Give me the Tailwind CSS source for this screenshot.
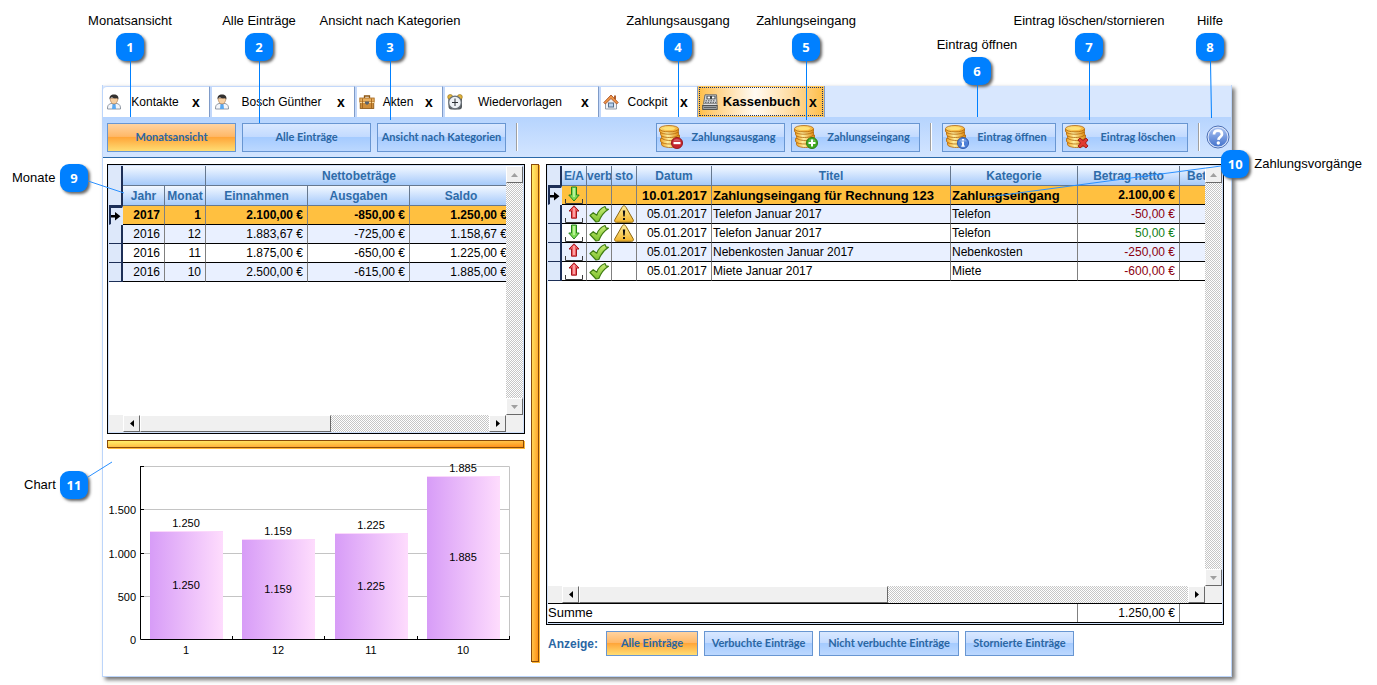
<!DOCTYPE html>
<html lang="de">
  <head>
    <meta charset="UTF-8" />
    <meta name="viewport" content="width=device-width, initial-scale=1.0" />
    <title>Kassenbuch</title>
    <script src="https://cdn.jsdelivr.net/npm/@tailwindcss/browser@4"></script>
  </head>
  <body class="bg-white font-['Liberation_Sans',sans-serif] text-xs text-black">
    <!-- Icons -->
    <svg class="absolute size-0">
      <defs>
        <linearGradient id="gold" x1="0" x2="1"><stop offset="0" stop-color="#f0a020" /><stop offset=".4" stop-color="#fff0a0" /><stop offset="1" stop-color="#e08a10" /></linearGradient>
        <linearGradient id="goldTop" x1="0" x2="1" y1="0" y2="1"><stop offset="0" stop-color="#ffe98a" /><stop offset="1" stop-color="#f5a623" /></linearGradient>
        <linearGradient id="bar" x1="0" x2="1"><stop offset="0" stop-color="#d79cf7" /><stop offset="1" stop-color="#fedcfd" /></linearGradient>
        <linearGradient id="help" x1="0" x2="0" y1="0" y2="1"><stop offset="0" stop-color="#a9c2f2" /><stop offset="1" stop-color="#4573cc" /></linearGradient>
        <linearGradient id="leaf" x1="0" x2="0" y1="0" y2="1"><stop offset="0" stop-color="#c9ee7a" /><stop offset="1" stop-color="#7cc02a" /></linearGradient>
        <linearGradient id="warn" x1="0" x2="0" y1="0" y2="1"><stop offset="0" stop-color="#fff0a0" /><stop offset="1" stop-color="#f2b42a" /></linearGradient>
      </defs>
      <symbol id="coins" viewBox="0 0 24 24">
        <g stroke="#b0660c" stroke-width=".8">
          <path d="M2.5 17.5v2c0 1.600 4 3 9 3s9-1.400 9-3v-2z" fill="url(#gold)" />
          <path d="M1.500 13.500v2.500c0 1.600 4 3 9 3s9-1.400 9-3v-2.500z" fill="url(#gold)" />
          <path d="M2.500 10v2.500c0 1.600 4 3 9 3s9-1.400 9-3V10z" fill="url(#gold)" />
          <path d="M1.500 7v2.500c0 1.600 4 3 9 3s9-1.400 9-3V7z" fill="url(#gold)" />
          <path d="M.5 4v2c0 1.700 4 3.200 9.500 3.200s9.500-1.500 9.500-3.200V4z" fill="url(#gold)" />
          <ellipse cx="10" cy="3.700" rx="9.500" ry="3.200" fill="url(#goldTop)" />
        </g>
        <ellipse cx="10" cy="3.500" rx="6" ry="1.600" fill="#ffe27a" />
      </symbol>
      <symbol id="minus" viewBox="0 0 12 12"><circle cx="6" cy="6" r="5.600" fill="#c4242b" stroke="#8c1218" stroke-width=".8" /><path d="M2 4.500a4.300 4.300 0 0 1 8 0z" fill="#fff" opacity=".25" /><rect x="2.500" y="5" width="7" height="2.200" fill="#fff" /></symbol>
      <symbol id="plus" viewBox="0 0 12 12"><circle cx="6" cy="6" r="5.600" fill="#3fa81f" stroke="#23760d" stroke-width=".8" /><path d="M2 4.500a4.300 4.300 0 0 1 8 0z" fill="#fff" opacity=".25" /><path d="M5 2.500h2V5h2.500v2H7v2.500H5V7H2.500V5H5z" fill="#fff" /></symbol>
      <symbol id="info" viewBox="0 0 12 12"><circle cx="6" cy="6" r="5.600" fill="#4d80d8" stroke="#2850a4" stroke-width=".8" /><path d="M2 4.500a4.300 4.300 0 0 1 8 0z" fill="#fff" opacity=".3" /><path d="M5 2h2v1.600H5zM4.500 4.500H7v4h.8v1.300H4.300V8.500H5V5.700h-.5z" fill="#fff" /></symbol>
      <symbol id="cross" viewBox="0 0 12 12"><path d="M1 3l2-2 3 2.500L9 1l2 2-2.500 3L11 9l-2 2-3-2.500L3 11 1 9l2.500-3z" fill="#e03a30" stroke="#9a1614" stroke-width=".9" /></symbol>
      <symbol id="person" viewBox="0 0 16 16">
        <path d="M1.500 15c-.3-3 1-5 3.500-5.500h6c2.500.5 3.800 2.500 3.500 5.500z" fill="#f4f6fa" stroke="#77828f" stroke-width=".8" />
        <path d="M6.500 10h3l.5 5H6z" fill="#5aa8f0" />
        <path d="M4.200 4.500C4.200 8 6 10 8 10s3.800-2 3.800-5.500z" fill="#f6cfa2" stroke="#a87444" stroke-width=".6" />
        <path d="M3.700 5.500C3 2 5 .5 8 .5s5 1.500 4.300 5L11 4C9 4.500 7 4 6 3.200L4.500 4z" fill="#33302f" />
      </symbol>
      <symbol id="briefcase" viewBox="0 0 16 16">
        <path d="M5.500 4V2h5v2" fill="none" stroke="#8c5410" stroke-width="1.300" />
        <rect x=".8" y="4" width="14.400" height="4" fill="#e8ae5e" stroke="#a4671d" stroke-width=".8" />
        <rect x="1.200" y="8.500" width="13.600" height="6" fill="#cf8f3c" stroke="#87520f" stroke-width=".8" />
        <path d="M.5 8.500h15" stroke="#f7d69a" />
        <path d="M3.500 4.500v10M12.500 4.500v10" stroke="#9a5e18" stroke-width=".8" />
        <path d="M6 7.500h4v2L8 11l-2-1.500z" fill="#59636e" />
      </symbol>
      <symbol id="clock" viewBox="0 0 16 16">
        <rect x="1.500" y="2" width="13.500" height="13.500" rx="3" fill="#555a5e" />
        <circle cx="3.200" cy="3" r="2.500" fill="#e2b43c" stroke="#8d6a14" stroke-width=".6" />
        <circle cx="12.800" cy="3" r="2.500" fill="#e2b43c" stroke="#8d6a14" stroke-width=".6" />
        <circle cx="8" cy="8.500" r="6.300" fill="#eef2f6" stroke="#6a7178" stroke-width="1.200" />
        <path d="M8 4.500V12M5 8.500h6" stroke="#2c3136" />
      </symbol>
      <symbol id="house" viewBox="0 0 16 16">
        <path d="M11 1.500h2v4h-2z" fill="#b06030" />
        <path d="M2.500 8L8 3l5.500 5v7h-11z" fill="#eef0f4" stroke="#7c8794" stroke-width=".8" />
        <path d="M.8 8.500L8 1l7.200 7.500-1.500 1.500L8 4.500 2.300 10z" fill="#ef9646" stroke="#a0441a" stroke-width=".8" />
        <rect x="5.500" y="9" width="5" height="4" fill="#b8d2f0" stroke="#55708e" />
      </symbol>
      <symbol id="register" viewBox="0 0 16 16">
        <path d="M3 .8h11.500l.5 9H1.500z" fill="#d4d7d9" stroke="#5d6265" stroke-width=".9" />
        <rect x="4.500" y="1.800" width="9" height="3.500" fill="#3c4143" />
        <path d="M5.500 2.500h2.500v2H5.500zM10 2.500h2.500v2H10z" fill="#fff" />
        <path d="M3.500 6.800h10M3 8.400h11" stroke="#4a4f52" stroke-width=".9" stroke-dasharray="1.500 1" />
        <path d="M1.500 9.800h13.300l.5 1.700H.8z" fill="#f4f5f6" stroke="#75797c" stroke-width=".6" />
        <rect x=".7" y="11.500" width="14.500" height="4" fill="#9da1a4" stroke="#45494b" stroke-width=".9" />
        <path d="M2 13.500h12" stroke="#5c6063" />
      </symbol>
      <symbol id="up" viewBox="0 0 20 18">
        <path d="M1.500 13v4.500h17V13" fill="none" stroke="#3c3c3c" />
        <path d="M10 .8l5 5.200h-2.500v7.200h-5V6H5z" fill="#ee5a5f" stroke="#a3161c" />
        <path d="M10 3v9" stroke="#ffb8b8" stroke-width="1.500" />
      </symbol>
      <symbol id="down" viewBox="0 0 20 18">
        <path d="M1.500 13v4.500h17V13" fill="none" stroke="#3c3c3c" />
        <path d="M10 15L4.800 9h2.700V1h5v8h2.700z" fill="#7edb55" stroke="#22821c" />
        <path d="M10 2v9" stroke="#ccf7b0" stroke-width="1.500" />
      </symbol>
      <symbol id="check" viewBox="0 0 20 18"><path d="M1 10.500l3.200-2.800 3.600 2.500C9 6.500 12 3 16 1.500l1 2.300 2.500.5C15 7 12 11 9.800 16.500L7 17z" fill="url(#leaf)" stroke="#3f7c12" stroke-width="1.200" stroke-linejoin="round" /></symbol>
      <symbol id="warning" viewBox="0 0 20 18">
        <path d="M10 .8c1 0 1.500.6 2 1.500l7.200 12.500c.6 1.300 0 2.500-1.500 2.500H2.300c-1.500 0-2.100-1.200-1.500-2.500L8 2.300C8.500 1.400 9 .8 10 .8z" fill="url(#warn)" stroke="#8a6410" />
        <path d="M8.800 5.500h2.400l-.5 6H9.300zM9 13h2v2H9z" fill="#111" />
      </symbol>
      <symbol id="pointer" viewBox="0 0 10 10"><path d="M0 4h4V1l5.500 4.200L4 9.500v-3H0z" fill="#000" /></symbol>
    </svg>

    <div class="relative flex min-h-screen flex-col pt-[85px] pr-[145px] pb-2 pl-[102px]">
      <!-- Fenster -->
      <div class="flex flex-1 flex-col border border-t-0 border-[#bcd5fa] bg-white shadow-[3px_3px_4px_#777]">
        <!-- Reiter -->
        <div class="flex h-8 border-t border-[#eef0f4] bg-[#d8e7fe]" role="tablist">
          <div class="flex w-[107px] items-center rounded-tl-sm border-t border-r border-t-[#c3d8fa] border-r-[#7f9bc8] bg-white pr-[5px] pl-[3px]">
            <svg class="size-4"><use href="#person" /></svg>
            <button class="flex-1 text-center" role="tab">Kontakte</button>
            <button class="w-4 text-sm leading-4 font-bold" aria-label="Kontakte schließen">x</button>
          </div>
          <div class="flex w-[145px] items-center border-t border-r border-l-2 border-t-[#c3d8fa] border-r-[#7f9bc8] border-l-[#c3d8fa] bg-white pr-[5px] pl-[2px]">
            <svg class="size-4"><use href="#person" /></svg>
            <button class="flex-1 text-center" role="tab">Bosch Günther</button>
            <button class="w-4 text-sm leading-4 font-bold" aria-label="Bosch Günther schließen">x</button>
          </div>
          <div class="flex w-[88px] items-center border-t border-r border-l-2 border-t-[#c3d8fa] border-r-[#7f9bc8] border-l-[#c3d8fa] bg-white pr-[5px] pl-[2px]">
            <svg class="size-4"><use href="#briefcase" /></svg>
            <button class="flex-1 text-center" role="tab">Akten</button>
            <button class="w-4 text-sm leading-4 font-bold" aria-label="Akten schließen">x</button>
          </div>
          <div class="flex w-[156px] items-center border-t border-r border-l-2 border-t-[#c3d8fa] border-r-[#7f9bc8] border-l-[#c3d8fa] bg-white pr-[5px] pl-[2px]">
            <svg class="size-4"><use href="#clock" /></svg>
            <button class="flex-1 text-center" role="tab">Wiedervorlagen</button>
            <button class="w-4 text-sm leading-4 font-bold" aria-label="Wiedervorlagen schließen">x</button>
          </div>
          <div class="flex w-[99px] items-center border-t border-r border-l-2 border-t-[#c3d8fa] border-r-[#7f9bc8] border-l-[#c3d8fa] bg-white pr-[5px] pl-[2px]">
            <svg class="size-4"><use href="#house" /></svg>
            <button class="flex-1 text-center" role="tab">Cockpit</button>
            <button class="w-4 text-sm leading-4 font-bold" aria-label="Cockpit schließen">x</button>
          </div>
          <div class="flex w-[127px] border-r border-[#7f9bc8] bg-[#ffc559] p-px">
            <div class="flex flex-1 items-center border border-dotted border-[#15306a] bg-linear-to-r from-[#ffc04a] via-[#fffaf2] via-45% to-[#ffc04a] pr-px pl-[2px]">
              <svg class="size-4"><use href="#register" /></svg>
              <button class="flex-1 text-center text-[13px] font-bold" role="tab" aria-selected="true">Kassenbuch</button>
              <button class="w-4 text-sm leading-4 font-bold" aria-label="Kassenbuch schließen">x</button>
            </div>
          </div>
        </div>

        <!-- Werkzeugleiste -->
        <div class="flex h-[41px] items-center gap-[6px] border-b border-[#2b69a8] bg-linear-to-b from-[#b6d4fe] to-[#d3e5ff] pr-px pl-1 font-['Lato',sans-serif] text-[11px] font-bold text-[#2a66a3]">
          <button class="h-[29px] w-[129px] border border-[#6896d2] bg-[linear-gradient(#ffd3a0,#ffb868_46%,#ffa63a_50%,#ffdd74)]">Monatsansicht</button>
          <button class="h-[29px] w-[129px] border border-[#6896d2] bg-[linear-gradient(#d9e8ff,#c2daff_48%,#a5cbff_50%,#bcd8ff)]">Alle Einträge</button>
          <button class="h-[29px] w-[129px] border border-[#6896d2] bg-[linear-gradient(#d9e8ff,#c2daff_48%,#a5cbff_50%,#bcd8ff)] whitespace-nowrap">Ansicht nach Kategorien</button>
          <div class="ml-1 h-7 w-[2px] border-r border-l border-r-white border-l-[#a0a0a0]"></div>
          <button class="ml-auto flex h-[29px] w-[129px] items-center border border-[#6896d2] bg-[linear-gradient(#d9e8ff,#c2daff_48%,#a5cbff_50%,#bcd8ff)] pl-[2px]">
            <svg class="size-6" viewBox="0 0 24 24"><use href="#coins" width="24" height="24" /><use href="#minus" x="12" y="12" width="12" height="12" /></svg>
            <span class="flex-1">Zahlungsausgang</span>
          </button>
          <button class="flex h-[29px] w-[129px] items-center border border-[#6896d2] bg-[linear-gradient(#d9e8ff,#c2daff_48%,#a5cbff_50%,#bcd8ff)] pl-[2px]">
            <svg class="size-6" viewBox="0 0 24 24"><use href="#coins" width="24" height="24" /><use href="#plus" x="12" y="12" width="12" height="12" /></svg>
            <span class="flex-1">Zahlungseingang</span>
          </button>
          <div class="mx-1 h-7 w-[2px] border-r border-l border-r-white border-l-[#a0a0a0]"></div>
          <button class="flex h-[29px] w-[114px] items-center border border-[#6896d2] bg-[linear-gradient(#d9e8ff,#c2daff_48%,#a5cbff_50%,#bcd8ff)] pl-[2px]">
            <svg class="size-6" viewBox="0 0 24 24"><use href="#coins" width="24" height="24" /><use href="#info" x="12" y="12" width="12" height="12" /></svg>
            <span class="flex-1">Eintrag öffnen</span>
          </button>
          <button class="flex h-[29px] w-[126px] items-center border border-[#6896d2] bg-[linear-gradient(#d9e8ff,#c2daff_48%,#a5cbff_50%,#bcd8ff)] pl-[2px]">
            <svg class="size-6" viewBox="0 0 24 24"><use href="#coins" width="24" height="24" /><use href="#cross" x="12" y="12" width="12" height="12" /></svg>
            <span class="flex-1">Eintrag löschen</span>
          </button>
          <div class="ml-1 h-7 w-[2px] border-r border-l border-r-white border-l-[#a0a0a0]"></div>
          <button aria-label="Hilfe">
            <svg class="size-6" viewBox="0 0 24 24">
              <circle cx="12" cy="12" r="11" fill="#dfe9fb" stroke="#4c6fb5" />
              <circle cx="12" cy="12" r="9.500" fill="url(#help)" />
              <path d="M8 9.500C8 7 9.700 5.700 12 5.700s4 1.300 4 3.500c0 2.800-3.400 2.800-3.600 5.600" fill="none" stroke="#fff" stroke-width="2.700" />
              <circle cx="12.300" cy="18" r="1.700" fill="#fff" />
            </svg>
          </button>
        </div>

        <div class="flex flex-1 gap-[6px] pt-[6px] pr-[7px] pb-[10px] pl-1">
          <!-- Monate + Chart -->
          <div class="flex w-[418px] flex-col">
            <div class="flex h-[270px] border border-black bg-[#cfe0fb] p-px">
              <div class="flex min-w-0 flex-1 flex-col bg-white">
                <div class="flex-1 overflow-hidden">
                  <table class="w-[403px] table-fixed border-separate border-spacing-0">
                    <colgroup>
                      <col class="w-[14px]" /><col class="w-[42px]" /><col class="w-[41px]" /><col class="w-[102px]" /><col class="w-[102px]" /><col class="w-[102px]" />
                    </colgroup>
                    <thead class="text-[#2f6ca9]">
                      <tr class="h-5">
                        <th rowspan="2" class="border-r-2 border-b border-[#1d2f57] bg-[#dde8fa] p-0"></th>
                        <th colspan="2" class="border-r border-b border-[#66788f] bg-linear-to-b from-[#f3f8ff] to-[#a6cafa] p-0"></th>
                        <th colspan="3" class="border-b border-[#66788f] bg-linear-to-b from-[#f3f8ff] to-[#a6cafa] p-0">Nettobeträge</th>
                      </tr>
                      <tr class="h-5">
                        <th class="border-r border-b border-[#66788f] bg-linear-to-b from-[#f3f8ff] to-[#a6cafa] p-0">Jahr</th>
                        <th class="border-r border-b border-[#66788f] bg-linear-to-b from-[#f3f8ff] to-[#a6cafa] p-0">Monat</th>
                        <th class="border-r border-b border-[#66788f] bg-linear-to-b from-[#f3f8ff] to-[#a6cafa] p-0">Einnahmen</th>
                        <th class="border-r border-b border-[#66788f] bg-linear-to-b from-[#f3f8ff] to-[#a6cafa] p-0">Ausgaben</th>
                        <th class="border-b border-[#66788f] bg-linear-to-b from-[#f3f8ff] to-[#a6cafa] p-0">Saldo</th>
                      </tr>
                    </thead>
                    <tbody id="months"></tbody>
                  </table>
                </div>
                <div class="flex h-[17px] bg-[#f0f0f0] pl-[14px]">
                  <button class="flex w-[17px] items-center justify-center border border-t-white border-r-[#696969] border-b-[#696969] border-l-white" aria-label="nach links"><svg class="h-[7px] w-1" viewBox="0 0 4 7"><path d="M4 0v7L0 3.500z" /></svg></button>
                  <div class="w-[191px] border border-t-white border-r-[#696969] border-b-[#696969] border-l-white"></div>
                  <div class="flex-1 bg-[conic-gradient(#fff_25%,#c6c6c6_0_50%,#fff_0_75%,#c6c6c6_0)] bg-[length:2px_2px]"></div>
                  <button class="flex w-[17px] items-center justify-center border border-t-white border-r-[#696969] border-b-[#696969] border-l-white" aria-label="nach rechts"><svg class="h-[7px] w-1" viewBox="0 0 4 7"><path d="M0 0v7l4-3.500z" /></svg></button>
                </div>
              </div>
              <div class="flex w-[17px] flex-col bg-[#f0f0f0] pb-[17px]">
                <button class="flex h-[17px] items-center justify-center border border-t-white border-r-[#696969] border-b-[#696969] border-l-white" aria-label="nach oben"><svg class="h-1 w-[7px] fill-[#a0a0a0]" viewBox="0 0 7 4"><path d="M0 4h7L3.500 0z" /></svg></button>
                <div class="flex-1 bg-[conic-gradient(#fff_25%,#c6c6c6_0_50%,#fff_0_75%,#c6c6c6_0)] bg-[length:2px_2px]"></div>
                <button class="flex h-[17px] items-center justify-center border border-t-white border-r-[#696969] border-b-[#696969] border-l-white" aria-label="nach unten"><svg class="h-1 w-[7px] fill-[#a0a0a0]" viewBox="0 0 7 4"><path d="M0 0h7L3.500 4z" /></svg></button>
              </div>
            </div>
            <div class="mt-[6px] mr-px h-2 border border-[#8a4a08] bg-linear-to-br from-[#fff06a] to-[#ff9010] shadow-[1px_1px_#ffb93a]"></div>
            <svg class="mt-2 h-[210px] w-full" viewBox="0 0 418 210">
              <path d="M34 10.500h368.500V183M34 53.500h368M34 97.500h368M34 140.500h368" fill="none" stroke="#c4c4c4" />
              <g id="chart"></g>
              <path d="M33.500 10v173.500h369V180M33 10.500h4M33 53.500h4M33 97.500h4M33 140.500h4M125.500 180v3M217.500 180v3M310.500 180v3" fill="none" stroke="#000" />
              <g text-anchor="end" font-size="11">
                <text x="29" y="58">1.500</text>
                <text x="29" y="102">1.000</text>
                <text x="29" y="145">500</text>
                <text x="29" y="188">0</text>
              </g>
            </svg>
          </div>

          <div class="mb-1 w-2 border border-[#8a4a08] bg-linear-to-br from-[#fff06a] to-[#ff9010] shadow-[1px_1px_#ffb93a]"></div>

          <!-- Zahlungsvorgänge -->
          <div class="ml-px flex min-w-0 flex-1 flex-col">
            <div class="flex flex-1 flex-col border border-black bg-[#cfe0fb] p-px">
              <div class="flex flex-1">
                <div class="flex min-w-0 flex-1 flex-col bg-white">
                  <div class="flex-1 overflow-hidden">
                    <table class="w-[calc(100%+65px)] table-fixed border-separate border-spacing-0 whitespace-nowrap">
                      <colgroup>
                        <col class="w-[14px]" /><col class="w-[25px]" /><col class="w-[25px]" /><col class="w-[25px]" /><col class="w-[75px]" /><col /><col class="w-[127px]" /><col class="w-[102px]" /><col class="w-[90px]" />
                      </colgroup>
                      <thead class="text-[#2f6ca9]">
                        <tr class="h-5">
                          <th class="border-r-2 border-b border-[#1d2f57] bg-[#dde8fa] p-0"></th>
                          <th class="border-r border-b border-[#66788f] bg-linear-to-b from-[#f3f8ff] to-[#a6cafa] p-0">E/A</th>
                          <th class="overflow-hidden border-r border-b border-[#66788f] bg-linear-to-b from-[#f3f8ff] to-[#a6cafa] p-0">verb</th>
                          <th class="border-r border-b border-[#66788f] bg-linear-to-b from-[#f3f8ff] to-[#a6cafa] p-0">sto</th>
                          <th class="border-r border-b border-[#66788f] bg-linear-to-b from-[#f3f8ff] to-[#a6cafa] p-0">Datum</th>
                          <th class="border-r border-b border-[#66788f] bg-linear-to-b from-[#f3f8ff] to-[#a6cafa] p-0">Titel</th>
                          <th class="border-r border-b border-[#66788f] bg-linear-to-b from-[#f3f8ff] to-[#a6cafa] p-0">Kategorie</th>
                          <th class="border-r border-b border-[#66788f] bg-linear-to-b from-[#f3f8ff] to-[#a6cafa] p-0">Betrag netto</th>
                          <th class="border-b border-[#66788f] bg-linear-to-b from-[#f3f8ff] to-[#a6cafa] p-0">Betrag brutto</th>
                        </tr>
                      </thead>
                      <tbody id="payments"></tbody>
                    </table>
                  </div>
                  <div class="flex h-[17px] bg-[#f0f0f0] pl-[14px]">
                    <button class="flex w-[17px] items-center justify-center border border-t-white border-r-[#696969] border-b-[#696969] border-l-white" aria-label="nach links"><svg class="h-[7px] w-1" viewBox="0 0 4 7"><path d="M4 0v7L0 3.500z" /></svg></button>
                    <div class="w-[309px] border border-t-white border-r-[#696969] border-b-[#696969] border-l-white"></div>
                    <div class="flex-1 bg-[conic-gradient(#fff_25%,#c6c6c6_0_50%,#fff_0_75%,#c6c6c6_0)] bg-[length:2px_2px]"></div>
                    <button class="flex w-[17px] items-center justify-center border border-t-white border-r-[#696969] border-b-[#696969] border-l-white" aria-label="nach rechts"><svg class="h-[7px] w-1" viewBox="0 0 4 7"><path d="M0 0v7l4-3.500z" /></svg></button>
                  </div>
                </div>
                <div class="flex w-[17px] flex-col bg-[#f0f0f0] pb-[17px]">
                  <button class="flex h-[17px] items-center justify-center border border-t-white border-r-[#696969] border-b-[#696969] border-l-white" aria-label="nach oben"><svg class="h-1 w-[7px] fill-[#a0a0a0]" viewBox="0 0 7 4"><path d="M0 4h7L3.500 0z" /></svg></button>
                  <div class="flex-1 bg-[conic-gradient(#fff_25%,#c6c6c6_0_50%,#fff_0_75%,#c6c6c6_0)] bg-[length:2px_2px]"></div>
                  <button class="flex h-[17px] items-center justify-center border border-t-white border-r-[#696969] border-b-[#696969] border-l-white" aria-label="nach unten"><svg class="h-1 w-[7px] fill-[#a0a0a0]" viewBox="0 0 7 4"><path d="M0 0h7L3.500 4z" /></svg></button>
                </div>
              </div>
              <div class="flex h-5 border-t border-b border-black bg-white leading-[18px]">
                <span class="flex-1 text-[13px]">Summe</span>
                <span class="w-[103px] border-r border-l border-[#808080] pr-1 text-right">1.250,00 €</span>
                <span class="w-[42px]"></span>
              </div>
            </div>

            <div class="mt-[6px] mb-[10px] flex items-center gap-[6px] font-['Lato',sans-serif] text-[11px] font-bold text-[#2a66a3]">
              <span class="w-[54px] pl-[2px] font-['Liberation_Sans',sans-serif] text-xs">Anzeige:</span>
              <button class="h-[25px] w-[92px] border border-[#6896d2] bg-[linear-gradient(#ffd3a0,#ffb868_46%,#ffa63a_50%,#ffdd74)]">Alle Einträge</button>
              <button class="h-[25px] w-[109px] border border-[#6896d2] bg-[linear-gradient(#d9e8ff,#c2daff_48%,#a5cbff_50%,#bcd8ff)]">Verbuchte Einträge</button>
              <button class="h-[25px] w-[140px] border border-[#6896d2] bg-[linear-gradient(#d9e8ff,#c2daff_48%,#a5cbff_50%,#bcd8ff)]">Nicht verbuchte Einträge</button>
              <button class="h-[25px] w-[109px] border border-[#6896d2] bg-[linear-gradient(#d9e8ff,#c2daff_48%,#a5cbff_50%,#bcd8ff)]">Stornierte Einträge</button>
            </div>
          </div>
        </div>
      </div>

      <!-- Hinweise -->
      <div class="pointer-events-none text-[13px] leading-5">
        <div class="absolute top-[11px] left-[50px] flex w-40 flex-col items-center">
          <span class="mb-[2px]">Monatsansicht</span>
          <b class="size-7 rounded-[9px] bg-[#0080ff] text-center font-['Open_Sans',sans-serif] leading-7 text-white shadow-[2px_2px_3px_#666]">1</b>
          <i class="h-14 w-px bg-[#0080ff]"></i>
        </div>
        <div class="absolute top-[11px] left-[179px] flex w-40 flex-col items-center">
          <span class="mb-[2px]">Alle Einträge</span>
          <b class="size-7 rounded-[9px] bg-[#0080ff] text-center font-['Open_Sans',sans-serif] leading-7 text-white shadow-[2px_2px_3px_#666]">2</b>
          <i class="h-[62px] w-px bg-[#0080ff]"></i>
        </div>
        <div class="absolute top-[11px] left-[310px] flex w-40 flex-col items-center">
          <span class="mb-[2px]">Ansicht nach Kategorien</span>
          <b class="size-7 rounded-[9px] bg-[#0080ff] text-center font-['Open_Sans',sans-serif] leading-7 text-white shadow-[2px_2px_3px_#666]">3</b>
          <i class="h-[59px] w-px bg-[#0080ff]"></i>
        </div>
        <div class="absolute top-[11px] right-[619px] flex w-40 flex-col items-center">
          <span class="mb-[2px]">Zahlungsausgang</span>
          <b class="size-7 rounded-[9px] bg-[#0080ff] text-center font-['Open_Sans',sans-serif] leading-7 text-white shadow-[2px_2px_3px_#666]">4</b>
          <i class="h-14 w-px bg-[#0080ff]"></i>
        </div>
        <div class="absolute top-[11px] right-[491px] flex w-40 flex-col items-center">
          <span class="mb-[2px]">Zahlungseingang</span>
          <b class="size-7 rounded-[9px] bg-[#0080ff] text-center font-['Open_Sans',sans-serif] leading-7 text-white shadow-[2px_2px_3px_#666]">5</b>
          <i class="h-[59px] w-px bg-[#0080ff]"></i>
        </div>
        <div class="absolute top-[35px] right-[320px] flex w-40 flex-col items-center">
          <span class="mb-[2px]">Eintrag öffnen</span>
          <b class="size-7 rounded-[9px] bg-[#0080ff] text-center font-['Open_Sans',sans-serif] leading-7 text-white shadow-[2px_2px_3px_#666]">6</b>
          <i class="h-8 w-px bg-[#0080ff]"></i>
        </div>
        <div class="absolute top-[11px] right-[208px] flex w-40 flex-col items-center">
          <span class="mb-[2px]">Eintrag löschen/stornieren</span>
          <b class="size-7 rounded-[9px] bg-[#0080ff] text-center font-['Open_Sans',sans-serif] leading-7 text-white shadow-[2px_2px_3px_#666]">7</b>
          <i class="h-[59px] w-px bg-[#0080ff]"></i>
        </div>
        <div class="absolute top-[11px] right-[87px] flex w-40 flex-col items-center">
          <span class="mb-[2px]">Hilfe</span>
          <b class="size-7 rounded-[9px] bg-[#0080ff] text-center font-['Open_Sans',sans-serif] leading-7 text-white shadow-[2px_2px_3px_#666]">8</b>
          <svg class="h-[57px] w-2" viewBox="0 0 8 57"><path d="M4.500 0l1 57" stroke="#0080ff" /></svg>
        </div>
        <div class="absolute top-[164px] left-[12px] flex items-center">
          <span class="w-12">Monate</span>
          <b class="size-7 rounded-[9px] bg-[#0080ff] text-center font-['Open_Sans',sans-serif] leading-7 text-white shadow-[2px_2px_3px_#666]">9</b>
          <svg class="h-7 w-9 overflow-visible" viewBox="0 0 36 28"><path d="M0 17l36 12" stroke="#2a90ff" /></svg>
        </div>
        <div class="absolute top-[150px] right-[15px] flex items-center">
          <svg class="h-7 w-[233px] overflow-visible" viewBox="0 0 233 28"><path d="M0 47L233 16" stroke="#2a90ff" /></svg>
          <b class="mr-[5px] size-7 rounded-[9px] bg-[#0080ff] text-center font-['Open_Sans',sans-serif] leading-7 text-white shadow-[2px_2px_3px_#666]">10</b>
          <span>Zahlungsvorgänge</span>
        </div>
        <div class="absolute top-[471px] left-[24px] flex items-center">
          <span class="w-9">Chart</span>
          <b class="size-7 rounded-[9px] bg-[#0080ff] text-center font-['Open_Sans',sans-serif] leading-7 text-white shadow-[2px_2px_3px_#666]">11</b>
          <svg class="h-7 w-6 overflow-visible" viewBox="0 0 24 28"><path d="M0 6l24-15" stroke="#2a90ff" /></svg>
        </div>
      </div>
    </div>

    <script>
      const months = [
        ["2017", "1", "2.100,00 €", "-850,00 €", "1.250,00 €"],
        ["2016", "12", "1.883,67 €", "-725,00 €", "1.158,67 €"],
        ["2016", "11", "1.875,00 €", "-650,00 €", "1.225,00 €"],
        ["2016", "10", "2.500,00 €", "-615,00 €", "1.885,00 €"],
      ];
      const payments = [
        ["down", "", "", "10.01.2017", "Zahlungseingang für Rechnung 123", "Zahlungseingang", "2.100,00 €"],
        ["up", "check", "warning", "05.01.2017", "Telefon Januar 2017", "Telefon", "-50,00 €"],
        ["down", "check", "warning", "05.01.2017", "Telefon Januar 2017", "Telefon", "50,00 €"],
        ["up", "check", "", "05.01.2017", "Nebenkosten Januar 2017", "Nebenkosten", "-250,00 €"],
        ["up", "check", "", "05.01.2017", "Miete Januar 2017", "Miete", "-600,00 €"],
      ];

      const rowClass = (i) =>
        i === 0 ? "h-[19px] bg-[#ffc040] font-bold" : i % 2 ? "h-[19px] bg-[#e9f0ff]" : "h-[19px] bg-white";

      // Zeilenmarkierung links
      const marker = (i) =>
        i === 0
          ? '<td class="border-t-2 border-r border-b border-l-2 border-t-[#1d2f57] border-r-[#dde8fa] border-b-[#dde8fa] border-l-[#1d2f57] bg-[#dde8fa] p-0"><svg class="size-[10px]"><use href="#pointer" /></svg></td>'
          : '<td class="border-r-2 border-b border-[#1d2f57] bg-[#dde8fa] p-0"></td>';

      const icon = (name) =>
        `<td class="border-r border-b border-r-[#808080] border-b-black p-0">${name ? `<svg class="mx-auto h-[18px] w-5"><use href="#${name}" /></svg>` : ""}</td>`;

      const amountColor = (i, value) => (i === 0 ? "text-black" : value[0] === "-" ? "text-[#8b0010]" : "text-[#108018]");

      document.getElementById("months").innerHTML = months
        .map(
          (row, i) =>
            `<tr class="${rowClass(i)}">${marker(i)}${row
              .map((v) => `<td class="border-r border-b border-r-[#808080] border-b-black pt-px pr-1 pb-0 pl-0 text-right leading-[17px]">${v}</td>`)
              .join("")}</tr>`
        )
        .join("");

      document.getElementById("payments").innerHTML = payments
        .map(
          (row, i) =>
            `<tr class="${rowClass(i)}">${marker(i)}${icon(row[0])}${icon(row[1])}${icon(row[2])}
              <td class="border-r border-b border-r-[#808080] border-b-black pt-px pr-1 pb-0 pl-0 text-right leading-[17px] ${i === 0 ? "text-[13px]" : "text-xs"}">${row[3]}</td>
              <td class="border-r border-b border-r-[#808080] border-b-black px-px pt-px pb-0 leading-[17px] ${i === 0 ? "text-[13px]" : "text-xs"}">${row[4]}</td>
              <td class="border-r border-b border-r-[#808080] border-b-black px-px pt-px pb-0 leading-[17px] ${i === 0 ? "text-[13px]" : "text-xs"}">${row[5]}</td>
              <td class="border-r border-b border-r-[#808080] border-b-black pt-px pr-1 pb-0 pl-0 text-right leading-[17px] ${amountColor(i, row[6])}">${row[6]}</td>
              <td class="border-b border-black p-0"></td></tr>`
        )
        .join("");

      // Balken
      const bars = [
        ["1", 1250, "1.250"],
        ["12", 1159, "1.159"],
        ["11", 1225, "1.225"],
        ["10", 1885, "1.885"],
      ];
      document.getElementById("chart").innerHTML = bars
        .map(([month, value, label], i) => {
          const h = Math.round((value * 173) / 2000);
          const x = 43 + Math.round(i * 92.3);
          const mid = x + 36;
          return `<rect x="${x}" y="${183 - h}" width="73" height="${h}" fill="url(#bar)" />
            <path d="M${x} ${183 - h}.5h73" stroke="#fbd8fb" />
            <text x="${mid}" y="${179 - h}" font-size="11" text-anchor="middle">${label}</text>
            <text x="${mid}" y="${187 - Math.round(h / 2)}" font-size="11" text-anchor="middle">${label}</text>
            <text x="${mid}" y="198" font-size="11" text-anchor="middle">${month}</text>`;
        })
        .join("");
    </script>
  </body>
</html>
